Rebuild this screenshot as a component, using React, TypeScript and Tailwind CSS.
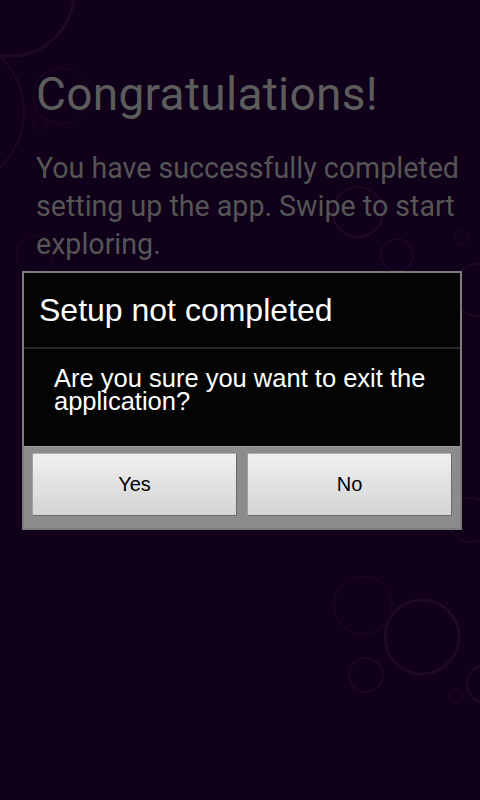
import React from "react";

function Bg() {
  const c = "#1f0828";
  return (
    <svg className="absolute inset-0" width="480" height="800" viewBox="0 0 480 800" fill="none">
      <circle cx="10" cy="-8" r="64" stroke={c} strokeWidth="3" />
      <circle cx="-52" cy="112" r="76" stroke={c} strokeWidth="2" />
      <circle cx="61" cy="96" r="28" stroke={c} strokeWidth="1" />
      <circle cx="40" cy="123" r="7" stroke={c} strokeWidth="1" />
      <circle cx="35" cy="255" r="19" stroke={c} strokeWidth="1" />
      <circle cx="358" cy="212" r="25" stroke={c} strokeWidth="2" />
      <circle cx="397" cy="255" r="16" stroke={c} strokeWidth="1.5" />
      <circle cx="462" cy="238" r="7" stroke={c} strokeWidth="1" />
      <circle cx="478" cy="290" r="26" stroke={c} strokeWidth="2" />
      <circle cx="470" cy="520" r="22" stroke={c} strokeWidth="1.5" />
      <circle cx="363" cy="605" r="29" stroke={c} strokeWidth="1" />
      <circle cx="422" cy="637" r="37" stroke={c} strokeWidth="3" />
      <circle cx="366" cy="675" r="17" stroke={c} strokeWidth="1.5" />
      <circle cx="456" cy="697" r="7" stroke={c} strokeWidth="1" />
      <circle cx="487" cy="684" r="20" stroke={c} strokeWidth="2" />
    </svg>
  );
}

export default function App() {
  return (
    <div className="relative w-[480px] h-[800px] overflow-hidden bg-[#10001a]" style={{ fontFamily: "Roboto, sans-serif" }}>
      <Bg />
      <div className="relative pl-[36px] pr-[4px] pt-[63px]">
        <h1 className="text-[46px] leading-[62px] text-[#5c5c5c] tracking-[0.3px]">Congratulations!</h1>
        <p className="mt-[24px] text-[28.6px] leading-[38px] text-[#555555]">
          You have successfully completed setting up the app. Swipe to start exploring.
        </p>
      </div>
      <div className="absolute inset-0 flex items-center pl-[22px]">
        <div className="w-[440px] border-2 border-[#7c7c7c] bg-[#040404]" style={{ fontFamily: "'Liberation Sans', Arial, sans-serif" }}>
          <div className="h-[74px] flex items-center pl-[15px] text-white text-[32px]">Setup not completed</div>
          <div className="h-[2px] bg-[#262626]" />
          <div className="h-[97px] pl-[30px] pr-[16px] pt-[18px] text-white text-[25.5px] leading-[23px]">
            Are you sure you want to exit the application?
          </div>
          <div className="bg-[#8c8c8c] border-t border-[#9a9a9a] pt-[6px] pb-[12px] px-[8px] flex gap-[10px]">
            <button className="flex-1 h-[63px] rounded-[2px] bg-gradient-to-b from-[#f0f0f0] to-[#d4d4d4] border border-[#6a6a6a] border-t-[#b0b0b0] border-l-[#a0a0a0] text-black text-[20px]">
              Yes
            </button>
            <button className="flex-1 h-[63px] rounded-[2px] bg-gradient-to-b from-[#f0f0f0] to-[#d4d4d4] border border-[#6a6a6a] border-t-[#b0b0b0] border-l-[#a0a0a0] text-black text-[20px]">
              No
            </button>
          </div>
        </div>
      </div>
    </div>
  );
}
